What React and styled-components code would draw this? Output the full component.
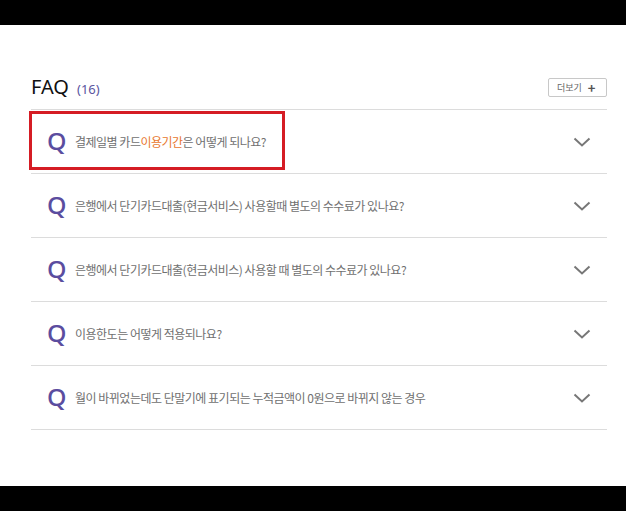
import React from "react";
import styled, { createGlobalStyle } from "styled-components";

const Global = createGlobalStyle`
  html, body { margin: 0; padding: 0; background: #000; }
  body { font-family: "Noto Sans", "Noto Sans CJK KR", sans-serif; }
`;

const Page = styled.div`
  display: flex;
  flex-direction: column;
  height: 511px;
  width: 626px;
`;

const Bar = styled.div`
  height: 25px;
  background: #000;
  flex: none;
`;

const Main = styled.main`
  background: #fff;
  height: 461px;
  padding: 50px 19px 0 31px;
  box-sizing: border-box;
`;

const Header = styled.div`
  display: flex;
  justify-content: space-between;
  align-items: flex-start;
  padding-bottom: 8px;
  border-bottom: 1px solid #dcdcdc;
`;

const Title = styled.h2`
  margin: 0;
  display: flex;
  align-items: baseline;
  gap: 8px;
  font-size: 20px;
  line-height: 24px;
  font-weight: 400;
  color: #111;
`;

const Count = styled.span`
  font-size: 13px;
  color: #5b55a0;
`;

const MoreButton = styled.button`
  margin-top: 3px;
  display: flex;
  align-items: center;
  gap: 6px;
  height: 19px;
  width: 59px;
  box-sizing: border-box;
  padding: 0 0 0 8px;
  border: 1px solid #c8c8c8;
  border-radius: 2px;
  background: #fff;
  font-family: "Noto Sans CJK KR", sans-serif;
  font-size: 9px;
  color: #666;
  cursor: pointer;
`;

const Plus = styled.span`
  font-size: 13px;
  font-weight: 700;
  color: #555;
  line-height: 1;
`;

const List = styled.ul`
  margin: 0;
  padding: 0;
  list-style: none;
`;

const Row = styled.li`
  position: relative;
  display: flex;
  align-items: center;
  height: 63px;
  padding: 0 16px;
  border-bottom: 1px solid #dcdcdc;
`;

const QMark = styled.span`
  width: 28px;
  flex: none;
  font-family: "Noto Sans", sans-serif;
  font-size: 23px;
  font-weight: 500;
  line-height: 1;
  color: #5b4d9f;
  transform: scaleX(1.08);
  transform-origin: left center;
`;

const Question = styled.span`
  flex: 1;
  font-family: "Noto Sans CJK KR", sans-serif;
  font-size: 12px;
  color: #707070;
  letter-spacing: -0.5px;
`;

const Accent = styled.span`
  color: #e8772e;
`;

const Highlight = styled.div`
  position: absolute;
  left: -2px;
  top: 1px;
  width: 256px;
  height: 59px;
  border: 3px solid #d51c24;
  box-sizing: border-box;
  pointer-events: none;
`;

const Chevron = () => (
  <svg width="18" height="10" viewBox="0 0 18 10" fill="none">
    <path d="M1.5 1.5 L9 8.5 L16.5 1.5" stroke="#777" strokeWidth="2" />
  </svg>
);

const items = [
  {
    text: (
      <>
        결제일별 카드<Accent>이용기간</Accent>은 어떻게 되나요?
      </>
    ),
    highlight: true,
  },
  { text: "은행에서 단기카드대출(현금서비스) 사용할때 별도의 수수료가 있나요?" },
  { text: "은행에서 단기카드대출(현금서비스) 사용할 때 별도의 수수료가 있나요?" },
  { text: "이용한도는 어떻게 적용되나요?" },
  { text: "월이 바뀌었는데도 단말기에 표기되는 누적금액이 0원으로 바뀌지 않는 경우" },
];

export default function App() {
  return (
    <Page>
      <Global />
      <Bar />
      <Main>
        <Header>
          <Title>
            FAQ <Count>(16)</Count>
          </Title>
          <MoreButton>
            더보기 <Plus>+</Plus>
          </MoreButton>
        </Header>
        <List>
          {items.map((it, i) => (
            <Row key={i}>
              <QMark>Q</QMark>
              <Question>{it.text}</Question>
              <Chevron />
              {it.highlight && <Highlight />}
            </Row>
          ))}
        </List>
      </Main>
      <Bar />
    </Page>
  );
}
